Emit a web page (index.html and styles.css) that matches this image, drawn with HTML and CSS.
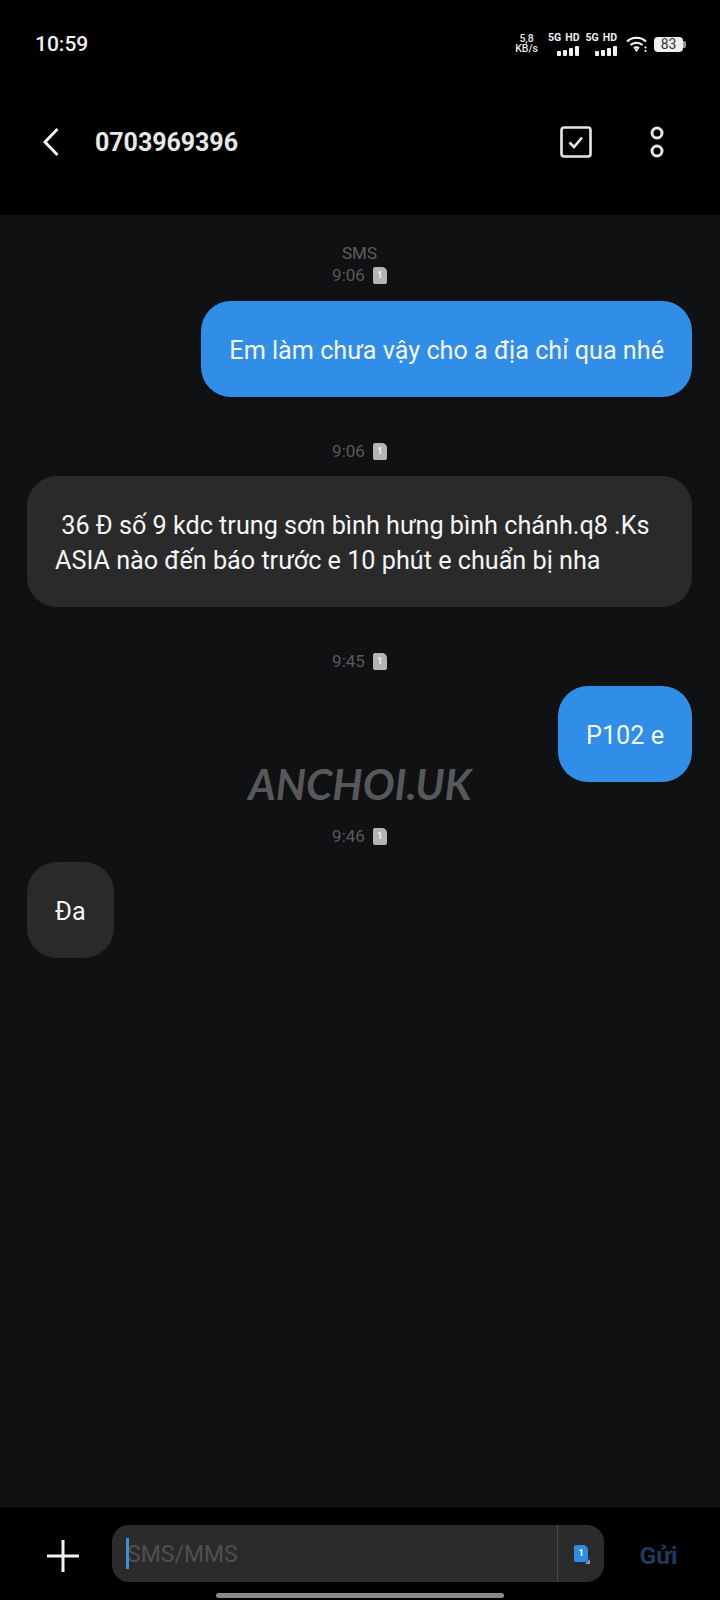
FILE: index.html
```html
<!DOCTYPE html>
<html lang="vi">
<head>
<meta charset="utf-8">
<title>0703969396</title>
<link rel="stylesheet" href="styles.css">
</head>
<body>
<div class="screen">
  <header class="top">
    <div class="status">
      <span class="clock">10:59</span>
      <div class="status-icons">
        <span class="speed"><span>5,8</span><span class="unit">KB/s</span></span>
        <span class="sig"><span class="sig-label">5G HD</span><span class="bars"><i class="b1"></i><i class="b2"></i><i class="b3"></i><i class="b4"></i></span></span>
        <span class="sig"><span class="sig-label">5G HD</span><span class="bars"><i class="b1"></i><i class="b2"></i><i class="b3"></i><i class="b4"></i></span></span>
        <svg class="wifi" width="22" height="18" viewBox="0 0 22 18"><path d="M1 6.500C6.500 1.500 14.500 1.500 20 6.500M4.500 10C8 7 13 7 16.500 10M8 13.300C9.500 12.100 11.500 12.100 13 13.300" fill="none" stroke="#fff" stroke-width="2.200"/><path d="M10.500 17l-2-2.300c1.200-.8 2.800-.8 4 0z" fill="#fff"/><circle cx="19.500" cy="12.500" r="1.100" fill="#fff"/><circle cx="19.500" cy="16" r="1.100" fill="#fff"/></svg>
        <span class="battery"><span class="level">83</span></span>
      </div>
    </div>
    <div class="appbar">
      <svg class="back" width="18" height="30" viewBox="0 0 18 30"><path d="M15.500 2 3 15 15.500 28" fill="none" stroke="#f2f2f2" stroke-width="3"/></svg>
      <span class="title">0703969396</span>
      <svg class="select" width="32" height="32" viewBox="0 0 32 32"><rect x="1.500" y="1.500" width="29" height="29" rx="2.500" fill="none" stroke="#e6e6e6" stroke-width="2.600"/><path d="M9.500 16.500 14 21l8-9.500" fill="none" stroke="#e6e6e6" stroke-width="2.600"/></svg>
      <svg class="more" width="16" height="32" viewBox="0 0 16 32"><circle cx="8" cy="7" r="5" fill="none" stroke="#e6e6e6" stroke-width="3"/><circle cx="8" cy="25" r="5" fill="none" stroke="#e6e6e6" stroke-width="3"/></svg>
    </div>
  </header>

  <main class="thread">
    <div class="stamp first"><span class="kind">SMS</span><span class="time">9:06 <b class="sim">1</b></span></div>
    <div class="bubble out">Em làm chưa vậy cho a địa chỉ qua nhé</div>
    <div class="stamp tight"><span class="time">9:06 <b class="sim">1</b></span></div>
    <div class="bubble in">&nbsp;36 Đ số 9 kdc trung sơn bình hưng bình chánh.q8 .Ks ASIA nào đến báo trước e 10 phút e chuẩn bị nha</div>
    <div class="stamp tight"><span class="time">9:45 <b class="sim">1</b></span></div>
    <div class="bubble out">P102 e</div>
    <div class="stamp"><span class="time">9:46 <b class="sim">1</b></span></div>
    <div class="bubble in">Đa</div>
    <div class="watermark">ANCHOI.UK</div>
  </main>

  <footer class="composer">
    <svg class="plus" width="32" height="32" viewBox="0 0 32 32"><path d="M16 0v32M0 16h32" stroke="#f2f2f2" stroke-width="3"/></svg>
    <div class="field">
      <div class="input"><span class="caret"></span><span class="hint">SMS/MMS</span></div>
      <div class="sim-pick"><b class="sim blue">1</b><span class="corner"></span></div>
    </div>
    <span class="send">Gửi</span>
  </footer>
  <div class="home"></div>
</div>
</body>
</html>
```

FILE: styles.css
```css
* { box-sizing: border-box; }
html, body { margin: 0; padding: 0; background: #000; }
.screen {
  width: 720px;
  height: 1600px;
  display: flex;
  flex-direction: column;
  position: relative;
  font-family: Roboto, "Liberation Sans", sans-serif;
  color: #f2f2f2;
  overflow: hidden;
}
.top { height: 215px; background: #000; flex: none; }
.status {
  height: 88px;
  padding: 0 34px 0 35px;
  display: flex;
  justify-content: space-between;
  align-items: center;
}
.clock { font-size: 21px; font-weight: 500; color: #f0f0f0; }
.status-icons { display: flex; align-items: center; }
.speed {
  display: flex;
  flex-direction: column;
  align-items: center;
  font-size: 10.500px;
  font-weight: 500;
  line-height: 10px;
  margin-right: 10px;
  color: #e8e8e8;
}
.sig { display: flex; flex-direction: column; align-items: flex-end; margin-right: 6px; }
.sig-label { font-size: 10.500px; font-weight: 700; line-height: 12px; word-spacing: 1.500px; color: #eee; white-space: nowrap; }
.bars { display: flex; align-items: flex-end; gap: 2px; height: 11px; margin-top: 1px; }
.bars i { display: block; width: 4px; background: #f2f2f2; border-radius: 1px; }
.b1 { height: 5px; }
.b2 { height: 6px; }
.b3 { height: 8px; }
.b4 { height: 10px; }
.wifi { margin: 0 6px 0 3px; }
.battery {
  width: 29px;
  height: 15px;
  background: #f0f0f0;
  border-radius: 4px;
  color: #333;
  font-size: 14px;
  line-height: 15px;
  text-align: center;
  position: relative;
  margin-right: 3px;
}
.battery::after {
  content: "";
  position: absolute;
  right: -3px;
  top: 4px;
  width: 3px;
  height: 7px;
  background: #999;
  border-radius: 0 2px 2px 0;
}
.appbar {
  height: 104px;
  padding: 4px 55px 0 42px;
  display: flex;
  align-items: center;
}
.back { flex: none; margin-right: 35px; }
.title { font-size: 25px; font-weight: 700; color: #e8e8e8; flex: 1; letter-spacing: -0.050px; }
.select { margin-right: 57px; }

.thread {
  flex: 1;
  background: #0f1113;
  padding: 0 28px 0 27px;
  display: flex;
  flex-direction: column;
  position: relative;
}
.stamp {
  display: flex;
  flex-direction: column;
  align-items: center;
  color: #58595b;
  font-size: 17px;
  line-height: 22px;
  padding-top: 43px;
  height: 80px;
  justify-content: flex-start;
}
.stamp.tight { height: 79px; }
.stamp.first { padding-top: 27px; height: 86px; }
.stamp .time { display: flex; align-items: center; gap: 8px; }
.kind { color: #5e6062; }
.sim {
  display: inline-block;
  width: 14px;
  height: 17px;
  background: #b4b4b4;
  border-radius: 2px 5px 2px 2px;
  color: #f4f4f4;
  font-size: 9px;
  line-height: 17px;
  font-weight: 700;
  text-align: center;
}
.bubble {
  font-size: 25.200px;
  line-height: 35px;
  padding: 32px 28px 29px;
  border-radius: 30px;
  max-width: 100%;
  color: #f5f5f5;
}
.bubble.out { align-self: flex-end; background: #308ee8; }
.bubble.in { align-self: flex-start; background: #2a2a2a; }
.watermark {
  position: absolute;
  left: 0;
  right: 0;
  top: 545px;
  text-align: center;
  font-family: Lato, sans-serif;
  font-style: italic;
  font-weight: 700;
  font-size: 42.300px;
  line-height: 48px;
  color: #57585a;
}
.composer {
  height: 93px;
  flex: none;
  background: #000;
  padding: 18px 0 0 47px;
  display: flex;
  align-items: flex-start;
}
.plus { margin: 15px 33px 0 0; flex: none; }
.field {
  width: 492px;
  height: 57px;
  background: #2b2b2b;
  border-radius: 17px;
  display: flex;
  overflow: hidden;
  flex: none;
}
.input { flex: 1; display: flex; align-items: center; padding: 2px 0 0 15px; position: relative; }
.caret { position: absolute; left: 14px; top: 13px; width: 3px; height: 31px; background: #3f8fdc; }
.hint { font-size: 23px; color: #4e4f50; }
.sim-pick {
  width: 47px;
  border-left: 1px solid #4a4a4b;
  display: flex;
  align-items: center;
  justify-content: center;
  position: relative;
}
.sim.blue { background: #2f8ce6; color: #fff; }
.corner {
  position: absolute;
  right: 14px;
  bottom: 18px;
  border-left: 5px solid transparent;
  border-bottom: 5px solid #8a9db5;
}
.send {
  width: 111px;
  text-align: center;
  font-size: 24.500px;
  font-weight: 700;
  line-height: 62px;
  color: #1f3a5c;
  flex: none;
  padding-right: 2px;
}
.home {
  position: absolute;
  left: 216px;
  bottom: 2px;
  width: 288px;
  height: 5px;
  background: #8a8a8a;
  border-radius: 3px;
}
```
